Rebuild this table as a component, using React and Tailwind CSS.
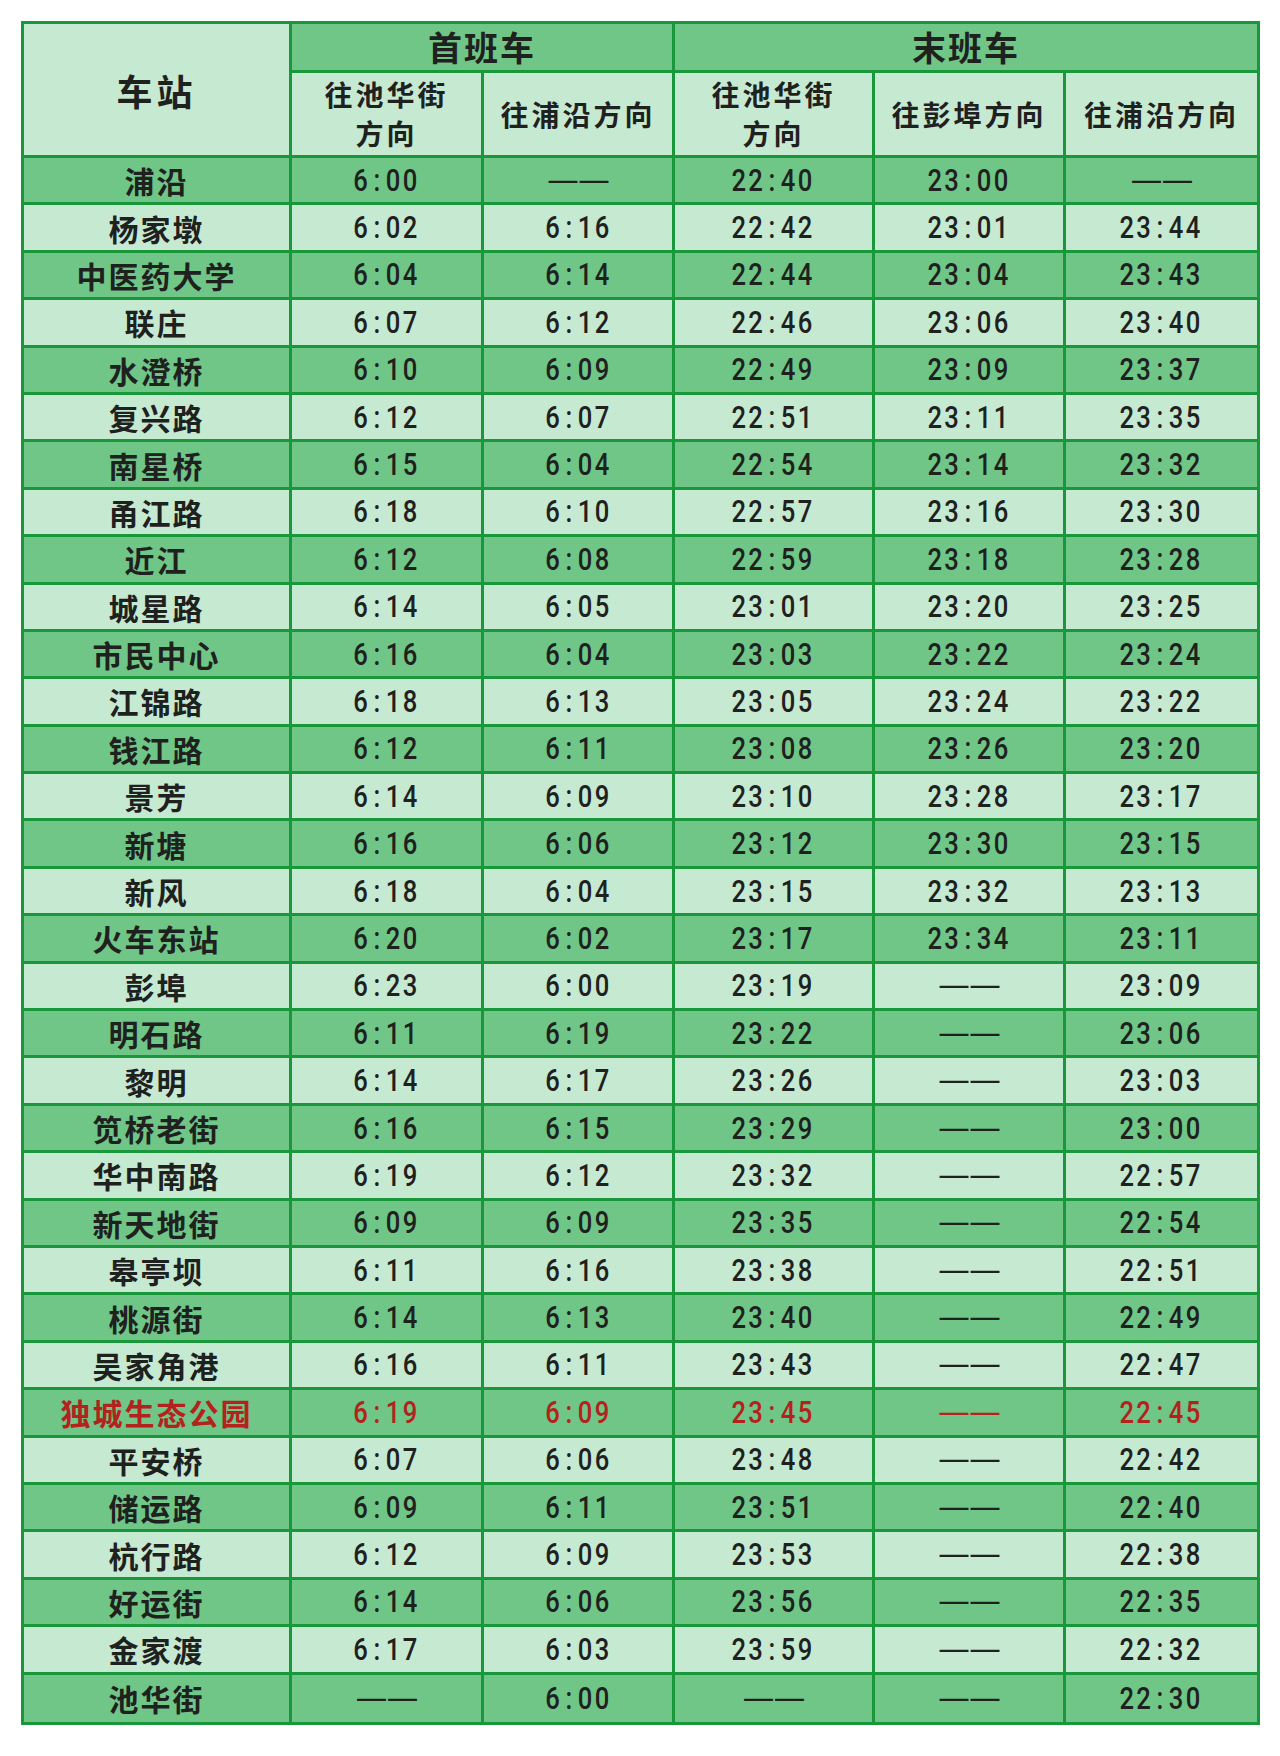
import React from "react";

const rows = [
  ["浦沿", "6:00", "——", "22:40", "23:00", "——"],
  ["杨家墩", "6:02", "6:16", "22:42", "23:01", "23:44"],
  ["中医药大学", "6:04", "6:14", "22:44", "23:04", "23:43"],
  ["联庄", "6:07", "6:12", "22:46", "23:06", "23:40"],
  ["水澄桥", "6:10", "6:09", "22:49", "23:09", "23:37"],
  ["复兴路", "6:12", "6:07", "22:51", "23:11", "23:35"],
  ["南星桥", "6:15", "6:04", "22:54", "23:14", "23:32"],
  ["甬江路", "6:18", "6:10", "22:57", "23:16", "23:30"],
  ["近江", "6:12", "6:08", "22:59", "23:18", "23:28"],
  ["城星路", "6:14", "6:05", "23:01", "23:20", "23:25"],
  ["市民中心", "6:16", "6:04", "23:03", "23:22", "23:24"],
  ["江锦路", "6:18", "6:13", "23:05", "23:24", "23:22"],
  ["钱江路", "6:12", "6:11", "23:08", "23:26", "23:20"],
  ["景芳", "6:14", "6:09", "23:10", "23:28", "23:17"],
  ["新塘", "6:16", "6:06", "23:12", "23:30", "23:15"],
  ["新风", "6:18", "6:04", "23:15", "23:32", "23:13"],
  ["火车东站", "6:20", "6:02", "23:17", "23:34", "23:11"],
  ["彭埠", "6:23", "6:00", "23:19", "——", "23:09"],
  ["明石路", "6:11", "6:19", "23:22", "——", "23:06"],
  ["黎明", "6:14", "6:17", "23:26", "——", "23:03"],
  ["笕桥老街", "6:16", "6:15", "23:29", "——", "23:00"],
  ["华中南路", "6:19", "6:12", "23:32", "——", "22:57"],
  ["新天地街", "6:09", "6:09", "23:35", "——", "22:54"],
  ["皋亭坝", "6:11", "6:16", "23:38", "——", "22:51"],
  ["桃源街", "6:14", "6:13", "23:40", "——", "22:49"],
  ["吴家角港", "6:16", "6:11", "23:43", "——", "22:47"],
  ["独城生态公园", "6:19", "6:09", "23:45", "——", "22:45"],
  ["平安桥", "6:07", "6:06", "23:48", "——", "22:42"],
  ["储运路", "6:09", "6:11", "23:51", "——", "22:40"],
  ["杭行路", "6:12", "6:09", "23:53", "——", "22:38"],
  ["好运街", "6:14", "6:06", "23:56", "——", "22:35"],
  ["金家渡", "6:17", "6:03", "23:59", "——", "22:32"],
  ["池华街", "——", "6:00", "——", "——", "22:30"],
];

const cjk = "font-['Noto_Sans_CJK_SC','Noto_Sans',sans-serif]";
const num = "font-['Roboto','Liberation_Sans',sans-serif]";
const cell = "border-[3px] border-[#18983a] text-center align-middle p-0";

const Time = ({ value }) => {
  if (value === "——") {
    return <span className="font-['DejaVu_Sans',sans-serif] text-[32px] leading-none tracking-[-1px]">——</span>;
  }
  const [h, m] = value.split(":");
  return (
    <span className={`${num} inline-block scale-x-[0.8] text-[32px] font-medium leading-none tracking-[3px]`}>
      {h}
      <span className="mx-[4px]">:</span>
      {m}
    </span>
  );
};

export default function App() {
  return (
    <div className="bg-white w-[1280px] h-[1756px] pt-[21px] pl-[21px]">
      <table className="table-fixed border-collapse w-[1236px] text-[#1f211f]">
        <colgroup>
          <col className="w-[268px]" />
          <col className="w-[192px]" />
          <col className="w-[191px]" />
          <col className="w-[200px]" />
          <col className="w-[191px]" />
          <col className="w-[194px]" />
        </colgroup>
        <thead>
          <tr className="h-[49px]">
            <th rowSpan={2} className={`${cell} bg-[#c6e9d1] ${cjk} text-[36px] font-bold tracking-[4px]`}>
              车站
            </th>
            <th colSpan={2} className={`${cell} bg-[#6fc687] ${cjk} text-[34px] font-bold leading-none tracking-[2px]`}>
              首班车
            </th>
            <th colSpan={3} className={`${cell} bg-[#6fc687] ${cjk} text-[34px] font-bold leading-none tracking-[2px]`}>
              末班车
            </th>
          </tr>
          <tr className="h-[85px]">
            {["往池华街方向", "往浦沿方向", "往池华街方向", "往彭埠方向", "往浦沿方向"].map((t, i) => (
              <th
                key={i}
                className={`${cell} bg-[#c6e9d1] ${cjk} text-[28px] font-bold leading-[39px] tracking-[3px]`}
              >
                {t === "往池华街方向" ? (
                  <>
                    往池华街
                    <br />
                    方向
                  </>
                ) : (
                  t
                )}
              </th>
            ))}
          </tr>
        </thead>
        <tbody>
          {rows.map((r, i) => {
            const dark = i % 2 === 0;
            const red = r[0] === "独城生态公园";
            const last = i === rows.length - 1;
            return (
              <tr
                key={r[0]}
                className={`${last ? "h-[50px]" : "h-[47.4px]"} ${dark ? "bg-[#6fc687]" : "bg-[#c6e9d1]"} ${
                  red ? "text-[#b3221d]" : ""
                }`}
              >
                <td className={`${cell} ${cjk} text-[30px] font-bold leading-none tracking-[2px]`}>{r[0]}</td>
                {r.slice(1).map((v, j) => (
                  <td key={j} className={cell}>
                    <Time value={v} />
                  </td>
                ))}
              </tr>
            );
          })}
        </tbody>
      </table>
    </div>
  );
}
